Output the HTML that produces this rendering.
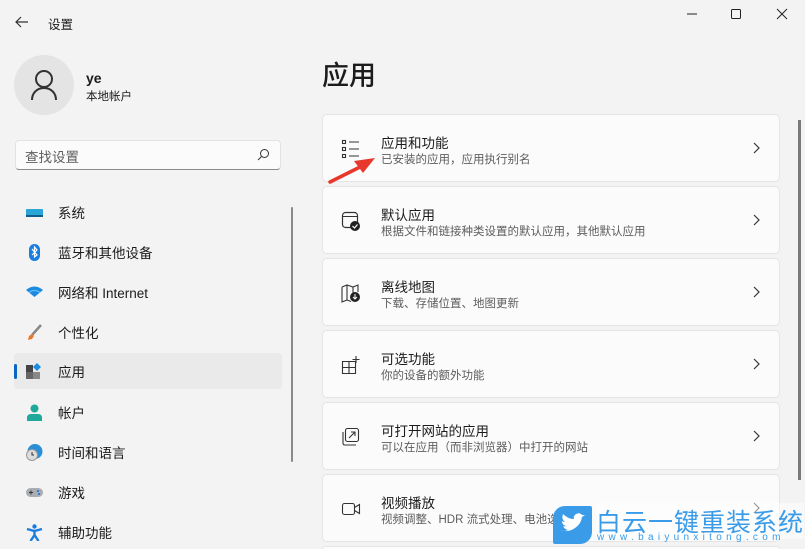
<!DOCTYPE html>
<html><head><meta charset="utf-8"><style>
*{margin:0;padding:0;box-sizing:border-box}
html{width:805px;height:549px;overflow:hidden}
body{width:805px;height:549px;overflow:hidden;background:#f3f3f3;font-family:"Liberation Sans","Noto Sans CJK SC",sans-serif;color:#1b1b1b;position:relative}
.abs{position:absolute}
.nav{position:absolute;left:14px;width:268px;height:36px;display:flex;align-items:center;font-size:13.5px}
.nav .ic{position:absolute;left:12px;top:10px;width:17px;height:17px}
.nav span{position:absolute;left:44px}
.card{position:absolute;left:322px;width:458px;height:68px;background:#fbfbfb;border:1px solid #e5e5e5;border-radius:5px}
.card .t{position:absolute;left:58px;top:17px;font-size:13.5px}
.card .s{position:absolute;left:58px;top:36px;font-size:11.5px;color:#5d5d5d}
.card svg.i{position:absolute;left:18px;top:24px}
.card .ch{position:absolute;right:18px;top:27px}
</style></head><body>
<svg class="abs" style="left:14px;top:15px" width="16" height="14"><path d="M14 7H2M7 2L2 7l5 5" fill="none" stroke="#333" stroke-width="1.2"/></svg>
<div class="abs" style="left:48px;top:14px;font-size:12.5px">设置</div>
<svg class="abs" style="left:684px;top:7px" width="110" height="14"><path d="M3 7h10" stroke="#222"/><rect x="47.5" y="2.5" width="9" height="9" rx="1" fill="none" stroke="#222"/><path d="M93 2l10 10M103 2l-10 10" stroke="#222"/></svg>
<div class="abs" style="left:14px;top:55px;width:60px;height:60px;border-radius:50%;background:#e4e4e4"></div>
<svg class="abs" style="left:30px;top:69px" width="28" height="32"><circle cx="14" cy="10" r="8" fill="none" stroke="#333" stroke-width="2"/><path d="M2 31c0-7 5-12 12-12s12 5 12 12" fill="none" stroke="#333" stroke-width="2"/></svg>
<div class="abs" style="left:86px;top:70px;font-size:14px;font-weight:bold">ye</div>
<div class="abs" style="left:86px;top:88px;font-size:11.5px">本地帐户</div>
<div class="abs" style="left:15px;top:140px;width:266px;height:30px;background:#fbfbfb;border:1px solid #e2e2e2;border-bottom:1px solid #8a8a8a;border-radius:4px"></div>
<div class="abs" style="left:25px;top:146px;font-size:13.5px;color:#5d5d5d">查找设置</div>
<svg class="abs" style="left:257px;top:148px" width="13" height="13"><circle cx="7.5" cy="5.5" r="4" fill="none" stroke="#333"/><path d="M4.5 8.5L1 12" stroke="#333"/></svg>
<div class="abs" style="left:291px;top:207px;width:2px;height:255px;background:#8a8a8a;border-radius:1px"></div>

<div class="nav" style="top:194px"><svg class="ic" viewBox="0 0 17 17"><rect x="0" y="5" width="17" height="8" rx="1" fill="#2aa5d8"/><rect x="0" y="11" width="17" height="2" fill="#0f5e8a"/></svg><span>系统</span></div>
<div class="nav" style="top:234px"><svg class="ic" viewBox="0 0 17 17"><rect x="3" y="0" width="11" height="17" rx="5.5" fill="#1a7ee0"/><path d="M6 5l5 6-2.5 2V3L11 6 6 11" fill="none" stroke="#fff" stroke-width="1.2"/></svg><span>蓝牙和其他设备</span></div>
<div class="nav" style="top:274px"><svg class="ic" viewBox="0 0 17 17"><path d="M0 6q8.5-7 17 0l-8.5 7z" fill="#1a8be0"/><path d="M3 8.5q5.5-4 11 0" fill="none" stroke="#6cc4f5"/></svg><span>网络和 Internet</span></div>
<div class="nav" style="top:314px"><svg class="ic" viewBox="0 0 17 17"><path d="M15 1L6 11" stroke="#888" stroke-width="2.5"/><path d="M6 10l-3 2-1 4 4-1 2-3z" fill="#e8782b"/></svg><span>个性化</span></div>
<div class="abs" style="left:14px;top:353px;width:268px;height:36px;background:#eaeaea;border-radius:4px"></div>
<div class="abs" style="left:14px;top:364px;width:3px;height:15px;background:#0867c0;border-radius:2px"></div>
<div class="nav" style="top:353px"><svg class="ic" viewBox="0 0 17 17"><rect x="0" y="2" width="7" height="7" fill="#444"/><rect x="0" y="9" width="7" height="7" fill="#666"/><rect x="7" y="9" width="7" height="7" fill="#888"/><path d="M11 0l4 4-4 4-4-4z" fill="#1a8be0"/></svg><span>应用</span></div>
<div class="nav" style="top:394px"><svg class="ic" viewBox="0 0 17 17"><circle cx="8.5" cy="4.5" r="4" fill="#1fa99a"/><path d="M1 17v-3q0-4 4-4h7q4 0 4 4v3z" fill="#1fa99a"/></svg><span>帐户</span></div>
<div class="nav" style="top:434px"><svg class="ic" viewBox="0 0 17 17"><circle cx="9" cy="7.5" r="7.5" fill="#2a8fd6"/><circle cx="6" cy="11" r="5.5" fill="#ddd" stroke="#999"/><path d="M6 8v3h2" fill="none" stroke="#333"/></svg><span>时间和语言</span></div>
<div class="nav" style="top:474px"><svg class="ic" viewBox="0 0 17 17"><rect x="0" y="4" width="17" height="9" rx="4.5" fill="#a9adb3"/><path d="M3 8.5h4M5 6.5v4" stroke="#333"/><circle cx="12" cy="7" r="1" fill="#1a6ed0"/><circle cx="13" cy="10" r="1" fill="#1a6ed0"/></svg><span>游戏</span></div>
<div class="nav" style="top:514px"><svg class="ic" viewBox="0 0 17 17"><circle cx="8.5" cy="2.5" r="2.2" fill="#1a7ee0"/><path d="M1 5l7.5 2 7.5-2M8.5 7v4l-4 6M8.5 11l4 6" fill="none" stroke="#1a7ee0" stroke-width="2.4"/></svg><span>辅助功能</span></div>

<div class="abs" style="left:322px;top:54px;font-size:27px;font-weight:500">应用</div>
<div class="abs" style="left:798px;top:120px;width:3px;height:360px;background:#7a7a7a"></div>

<div class="card" style="top:114px"><svg class="i" width="20" height="20"><g fill="none" stroke="#333" stroke-width="1.1"><rect x="1.5" y="1.5" width="3" height="3"/><rect x="1.5" y="8.5" width="3" height="3"/><rect x="1.5" y="15.5" width="3" height="3"/><path d="M8 3h10M8 10h10M8 17h10"/></g></svg><div class="t">应用和功能</div><div class="s">已安装的应用，应用执行别名</div><svg class="ch" width="8" height="12"><path d="M1 1l5 5-5 5" fill="none" stroke="#333" stroke-width="1.2"/></svg></div>
<div class="card" style="top:186px"><svg class="i" width="20" height="20"><rect x="1.5" y="1.5" width="15" height="15" rx="3" fill="none" stroke="#333" stroke-width="1.2"/><path d="M1.5 5.5h15" stroke="#333"/><circle cx="14" cy="15" r="5" fill="#222"/><path d="M11.5 15l2 2 3-3.5" fill="none" stroke="#fff" stroke-width="1.2"/></svg><div class="t">默认应用</div><div class="s">根据文件和链接种类设置的默认应用，其他默认应用</div><svg class="ch" width="8" height="12"><path d="M1 1l5 5-5 5" fill="none" stroke="#333" stroke-width="1.2"/></svg></div>
<div class="card" style="top:258px"><svg class="i" width="20" height="20"><path d="M1 4l5-2 6 2 5-2v7M12 4v6M6 2v15L1 19V4M6 17l4 1.5" fill="none" stroke="#333" stroke-width="1.1"/><circle cx="14" cy="14" r="5" fill="#222"/><path d="M14 11v5M12 14l2 2 2-2" fill="none" stroke="#fff"/></svg><div class="t">离线地图</div><div class="s">下载、存储位置、地图更新</div><svg class="ch" width="8" height="12"><path d="M1 1l5 5-5 5" fill="none" stroke="#333" stroke-width="1.2"/></svg></div>
<div class="card" style="top:330px"><svg class="i" width="20" height="20"><path d="M1.5 6.5h13v12h-13zM1.5 12.5h13M8 6.5v12M15 1v7M11.5 4.5h7" fill="none" stroke="#333" stroke-width="1.1"/></svg><div class="t">可选功能</div><div class="s">你的设备的额外功能</div><svg class="ch" width="8" height="12"><path d="M1 1l5 5-5 5" fill="none" stroke="#333" stroke-width="1.2"/></svg></div>
<div class="card" style="top:402px"><svg class="i" width="20" height="20"><rect x="4.5" y="1.5" width="13" height="13" rx="2" fill="none" stroke="#333" stroke-width="1.1"/><path d="M2 5v11q0 2 2 2h11" fill="none" stroke="#333" stroke-width="1.1"/><path d="M8 11l6-6M10 5h4v4" fill="none" stroke="#333" stroke-width="1.1"/></svg><div class="t">可打开网站的应用</div><div class="s">可以在应用（而非浏览器）中打开的网站</div><svg class="ch" width="8" height="12"><path d="M1 1l5 5-5 5" fill="none" stroke="#333" stroke-width="1.2"/></svg></div>
<div class="card" style="top:474px"><svg class="i" width="20" height="20"><rect x="1.5" y="4.5" width="12" height="11" rx="2" fill="none" stroke="#333" stroke-width="1.1"/><path d="M13.5 8.5l5-3v9l-5-3" fill="none" stroke="#333" stroke-width="1.1"/></svg><div class="t">视频播放</div><div class="s">视频调整、HDR 流式处理、电池选项</div><svg class="ch" width="8" height="12"><path d="M1 1l5 5-5 5" fill="none" stroke="#333" stroke-width="1.2"/></svg></div>
<div class="card" style="top:546px;height:3px;border-radius:5px 5px 0 0;border-bottom:none"></div>

<svg class="abs" style="left:326px;top:154px" width="52" height="32"><path d="M4 28L34 13" stroke="#e8382e" stroke-width="3.5" stroke-linecap="round"/><path d="M49 4L28 7l9 12z" fill="#e8382e"/></svg>

<div class="abs" style="left:553px;top:506px;width:39px;height:38px;background:#3a9be8;border-radius:12px 2px 12px 2px"></div>
<svg class="abs" style="left:557px;top:512px" width="32" height="26"><path d="M3 18q8 3 15-2 6-4 7-11l3-2-3 0q-2-3-6-1-3 2-2 5-6 0-11-5-2 5 2 8-2 0-3-1 0 4 4 5-2 1-3 0 1 3 5 4-4 2-8 0z" fill="#fff"/></svg>
<div class="abs" style="left:596px;top:503px;font-size:25px;color:#3a9be8;letter-spacing:1px;background:rgba(255,255,255,.5)">白云一键重装系统</div>
<div class="abs" style="left:597px;top:532px;font-size:10px;color:#3a9be8;letter-spacing:4.3px">www.baiyunxitong.com</div>
</body></html>
